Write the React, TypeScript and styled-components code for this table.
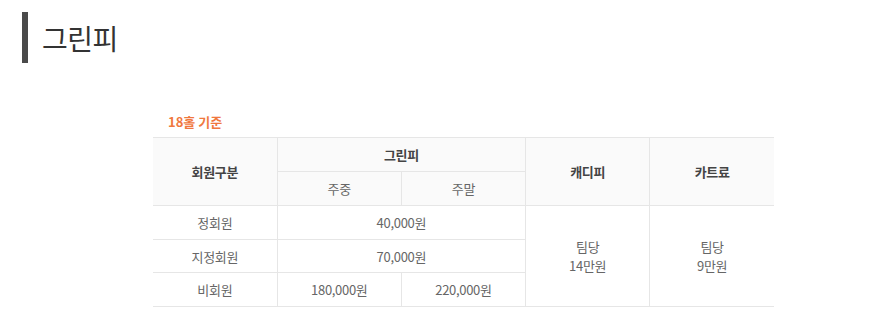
import React from 'react';
import styled, { createGlobalStyle } from 'styled-components';

const GlobalStyle = createGlobalStyle`
  html, body {
    margin: 0;
    padding: 0;
    background: #fff;
    font-family: 'Noto Sans CJK KR', 'Noto Sans', sans-serif;
  }
`;

const Page = styled.div`
  width: 879px;
  padding-top: 12px;
`;

const TitleBar = styled.h2`
  display: flex;
  align-items: center;
  margin: 0 0 0 22px;
  height: 51px;
  padding-left: 14px;
  border-left: 6px solid #4a4a4a;
  font-size: 28px;
  font-weight: 400;
  color: #333;
  letter-spacing: -0.5px;
`;

const Section = styled.div`
  width: 621px;
  margin: 49px 0 0 153px;
`;

const Caption = styled.p`
  margin: 0 0 6px 15px;
  font-size: 13px;
  font-weight: 700;
  line-height: 19px;
  color: #f0783e;
`;

const Table = styled.table`
  width: 100%;
  border-collapse: collapse;
  table-layout: fixed;
  border-top: 1px solid #e1e1e1;
  border-bottom: 1px solid #e1e1e1;
  border-left: hidden;
  border-right: hidden;
`;

const Col = styled.col`
  width: 20%;
`;

const Th = styled.th<{ $sub?: boolean }>`
  height: 33px;
  padding: 0;
  border: 1px solid #e6e6e6;
  background: #fafafa;
  text-align: center;
  vertical-align: middle;
  font-size: 13px;
  line-height: 19px;
  letter-spacing: -0.3px;
  color: ${({ $sub }) => ($sub ? '#666' : '#444')};
  font-weight: ${({ $sub }) => ($sub ? 400 : 700)};
`;

const Td = styled.td`
  height: 32.7px;
  padding: 0;
  border: 1px solid #e6e6e6;
  background: #fff;
  text-align: center;
  vertical-align: middle;
  font-size: 13px;
  line-height: 19px;
  letter-spacing: -0.3px;
  color: #666;
`;

type Row = { name: string; weekday: string; weekend?: string };

const rows: Row[] = [
  { name: '정회원', weekday: '40,000원' },
  { name: '지정회원', weekday: '70,000원' },
  { name: '비회원', weekday: '180,000원', weekend: '220,000원' },
];

const App: React.FC = () => {
  return (
    <Page>
      <GlobalStyle />
      <TitleBar>그린피</TitleBar>
      <Section>
        <Caption>18홀 기준</Caption>
        <Table>
          <colgroup>
            <Col />
            <Col />
            <Col />
            <Col />
            <Col />
          </colgroup>
          <thead>
            <tr>
              <Th rowSpan={2}>회원구분</Th>
              <Th colSpan={2}>그린피</Th>
              <Th rowSpan={2}>캐디피</Th>
              <Th rowSpan={2}>카트료</Th>
            </tr>
            <tr>
              <Th $sub>주중</Th>
              <Th $sub>주말</Th>
            </tr>
          </thead>
          <tbody>
            {rows.map((row, i) => (
              <tr key={row.name}>
                <Td>{row.name}</Td>
                {row.weekend ? (
                  <>
                    <Td>{row.weekday}</Td>
                    <Td>{row.weekend}</Td>
                  </>
                ) : (
                  <Td colSpan={2}>{row.weekday}</Td>
                )}
                {i === 0 && (
                  <>
                    <Td rowSpan={3}>팀당<br />14만원</Td>
                    <Td rowSpan={3}>팀당<br />9만원</Td>
                  </>
                )}
              </tr>
            ))}
          </tbody>
        </Table>
      </Section>
    </Page>
  );
};

export default App;
